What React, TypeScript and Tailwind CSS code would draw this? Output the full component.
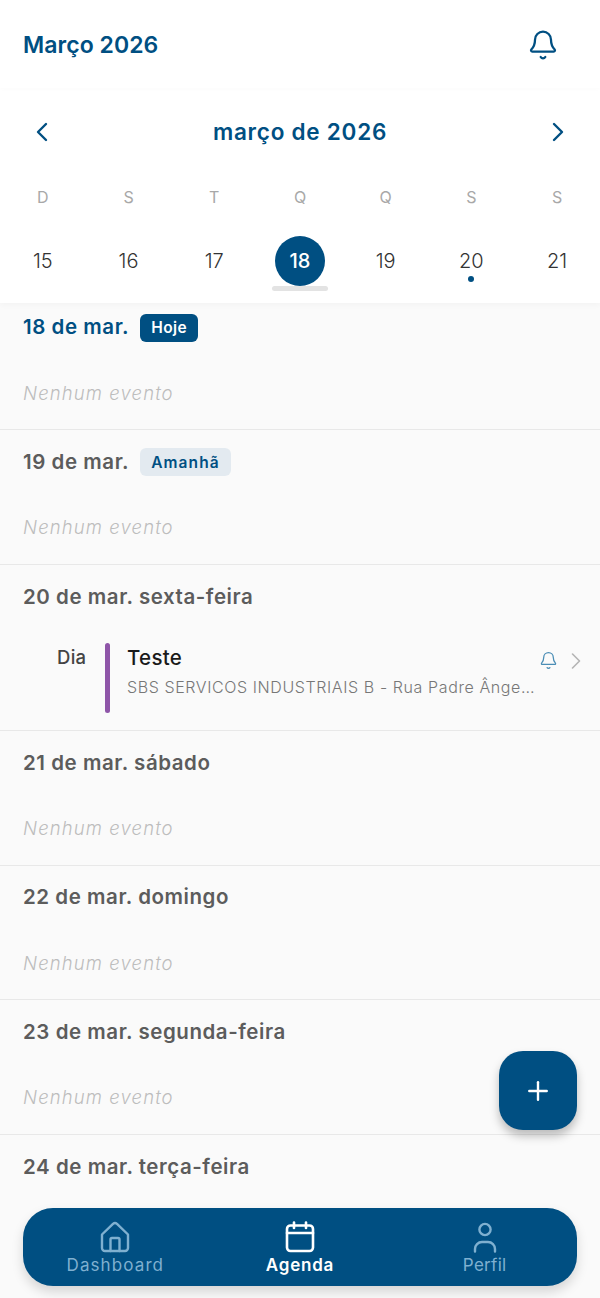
import { Bell, ChevronLeft, ChevronRight, Plus } from 'lucide-react'

const weekDays = ['D', 'S', 'T', 'Q', 'Q', 'S', 'S']
const days = [15, 16, 17, 18, 19, 20, 21]

function HomeIcon() {
  return (
    <svg width="30" height="32" viewBox="0 0 30 32" fill="none" stroke="currentColor" strokeWidth="2.4" strokeLinejoin="round" strokeLinecap="round">
      <path d="M2 13.5 L13 2.8 a3 3 0 0 1 4 0 L28 13.5 V27 a3 3 0 0 1 -3 3 H5 a3 3 0 0 1 -3 -3 Z" />
      <path d="M10.5 30 V18.5 a1.5 1.5 0 0 1 1.5 -1.5 H18 a1.5 1.5 0 0 1 1.5 1.5 V30" />
    </svg>
  )
}

function CalendarIcon() {
  return (
    <svg width="30" height="32" viewBox="0 0 30 32" fill="none" stroke="currentColor" strokeWidth="2.6" strokeLinecap="round" strokeLinejoin="round">
      <rect x="2" y="4.5" width="26" height="25.5" rx="3.5" />
      <path d="M2 12 H28" />
      <path d="M9 1.5 V7" />
      <path d="M21 1.5 V7" />
    </svg>
  )
}

function PersonIcon() {
  return (
    <svg width="24" height="32" viewBox="0 0 24 32" fill="none" stroke="currentColor" strokeWidth="2.4" strokeLinecap="round">
      <circle cx="12" cy="8.5" r="5.6" />
      <path d="M2 30.5 V28 a7 7 0 0 1 7 -7 H15 a7 7 0 0 1 7 7 V30.5" />
    </svg>
  )
}

function DaySection({ title, badge, today, tall }: { title: string; badge?: string; today?: boolean; tall?: boolean }) {
  return (
    <section className="border-b border-[#e8e8e8] px-[23px] last:border-b-0">
      <div className="flex h-[64px] items-center gap-[11px]">
        <h3 className={`text-[20.5px] font-semibold tracking-[0.55px] ${today ? 'text-[#004f82]' : 'text-[#5c5c5c]'}`}>{title}</h3>
        {badge && (
          <span
            className={`flex h-[28px] items-center rounded-[6px] px-[11px] text-[15.5px] font-semibold ${
              today ? 'bg-[#004f82] tracking-[0.4px] text-white' : 'bg-[#e3eaf0] tracking-[1.1px] text-[#004f82]'
            }`}
          >
            {badge}
          </span>
        )}
      </div>
      {tall ? (
        <div className="-mx-[23px] flex h-[101px] pl-[57px] pr-[10px] pt-[14px]">
          <span className="w-[32px] pt-[1px] text-[18.5px] font-medium tracking-[0.3px] text-[#444444]">Dia</span>
          <div className="ml-[16px] h-[70px] w-[5px] rounded-full bg-[#8e55a8]" />
          <div className="ml-[17px] min-w-0 flex-1 pt-[1px]">
            <p className="text-[20.5px] font-medium leading-[28px] tracking-[0.3px] text-[#1a1a1a]">Teste</p>
            <p className="mt-[3px] whitespace-nowrap text-[16px] font-light tracking-[0.6px] text-[#777777]">
              SBS SERVICOS INDUSTRIAIS B - Rua Padre Ânge…
            </p>
          </div>
          <div className="flex h-[30px] items-center gap-[4px] pt-[6px]">
            <Bell size={19} strokeWidth={1.6} className="text-[#4a8db5]" />
            <ChevronRight size={28} strokeWidth={1.4} className="text-[#b5b5b5]" />
          </div>
        </div>
      ) : (
        <div className="flex h-[69.67px] items-start pt-[20px]">
          <p className="text-[18.5px] font-light italic tracking-[1.1px] text-[#bdbdbd]">Nenhum evento</p>
        </div>
      )}
    </section>
  )
}

export default function App() {
  return (
    <div className="relative h-[1298px] w-[600px] overflow-hidden bg-[#fafafa] font-['Inter',sans-serif]">
      <div className="relative z-10 bg-white shadow-[0_2px_6px_rgba(0,0,0,0.03)]">
        <header className="flex h-[88px] items-center justify-between pl-[23px] pr-[41px] pt-[2px] shadow-[0_1px_4px_rgba(0,0,0,0.02)]">
          <h1 className="text-[23px] font-semibold tracking-[0.05px] text-[#004f82]">Março 2026</h1>
          <Bell size={32} strokeWidth={1.7} className="text-[#004f82]" />
        </header>

        <div className="flex h-[88px] items-center justify-between px-[26px]">
          <ChevronLeft size={32} strokeWidth={1.8} className="text-[#004f82]" />
          <h2 className="text-[22.5px] font-semibold tracking-[0.75px] text-[#004f82]">março de 2026</h2>
          <ChevronRight size={32} strokeWidth={1.8} className="text-[#004f82]" />
        </div>

        <div className="grid h-[40px] grid-cols-7 items-center pt-[2px]">
          {weekDays.map((day, i) => (
            <span key={i} className="text-center text-[16px] text-[#a8a8a8]">{day}</span>
          ))}
        </div>

        <div className="grid h-[87px] grid-cols-7 items-start pt-[20px]">
          {days.map((day) => (
            <div key={day} className="relative flex h-[50px] items-center justify-center">
              {day === 18 ? (
                <>
                  <span className="flex size-[50px] items-center justify-center rounded-full bg-[#004f82] text-[20px] font-medium text-white">{day}</span>
                  <span className="absolute left-1/2 top-[50px] h-[5px] w-[56px] -translate-x-1/2 rounded-full bg-[#e3e3e3]" />
                </>
              ) : (
                <span className="text-[20px] font-light text-[#333333]">{day}</span>
              )}
              {day === 20 && <span className="absolute left-1/2 top-[40px] size-[6px] -translate-x-1/2 rounded-full bg-[#004f82]" />}
            </div>
          ))}
        </div>
      </div>

      <div className="-mt-[7.4px]">
        <DaySection title="18 de mar." badge="Hoje" today />
        <DaySection title="19 de mar." badge="Amanhã" />
        <DaySection title="20 de mar. sexta-feira" tall />
        <DaySection title="21 de mar. sábado" />
        <DaySection title="22 de mar. domingo" />
        <DaySection title="23 de mar. segunda-feira" />
        <DaySection title="24 de mar. terça-feira" />
      </div>

      <button className="absolute left-[499px] top-[1051px] flex h-[79px] w-[78px] items-center justify-center rounded-[24px] bg-[#004f82] text-white shadow-[0_6px_10px_rgba(0,0,0,0.25)]">
        <Plus size={30} strokeWidth={1.9} />
      </button>

      <nav className="absolute left-[23px] top-[1208px] grid h-[78px] w-[554px] grid-cols-3 items-center rounded-[30px] bg-[#004f82] pt-[2px] shadow-[0_6px_12px_rgba(0,0,0,0.15)]">
        <div className="flex flex-col items-center text-[#7fb0d0]">
          <HomeIcon />
          <span className="mt-[1px] text-[17px] leading-[22px] tracking-[1.1px]">Dashboard</span>
        </div>
        <div className="flex flex-col items-center text-white">
          <CalendarIcon />
          <span className="mt-[1px] text-[17px] font-semibold leading-[22px] tracking-[0.8px]">Agenda</span>
        </div>
        <div className="flex flex-col items-center text-[#7fb0d0]">
          <PersonIcon />
          <span className="mt-[1px] text-[17px] leading-[22px] tracking-[0.3px]">Perfil</span>
        </div>
      </nav>
    </div>
  )
}
